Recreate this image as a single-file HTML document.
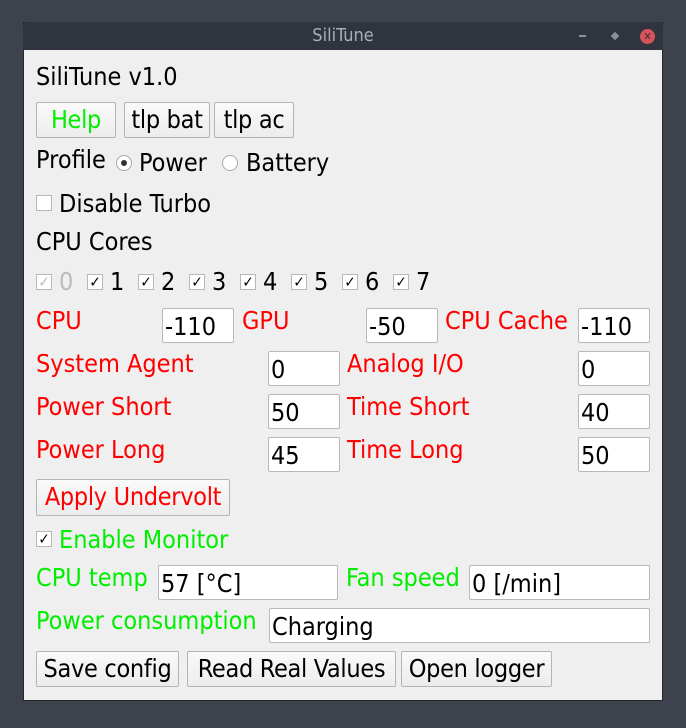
<!DOCTYPE html>
<html><head><meta charset="utf-8"><style>
*{margin:0;padding:0;box-sizing:border-box}
body{width:686px;height:728px;background:#3e424c;position:relative;overflow:hidden;font-family:"DejaVu Sans Condensed","DejaVu Sans","Liberation Sans",sans-serif;font-size:25px;color:#000}
.win{position:absolute;left:23px;top:22px;width:640px;height:679px;background:#efefef;border:1px solid #23262c}
.tb{position:absolute;left:23px;top:22px;width:640px;height:28px;background:#2f343f;border-radius:4px 4px 0 0;color:#a9adb6;font-size:18px;text-align:center;line-height:28px}
.a{position:absolute;white-space:nowrap;line-height:26px}
.btn{position:absolute;border:1px solid #b4b4b4;border-radius:2px;background:linear-gradient(#fafafa,#ececec);text-align:center;line-height:34px;white-space:nowrap;letter-spacing:-0.3px}
.in{position:absolute;background:#fff;border:1px solid #b8b8b8;border-radius:2px;padding-left:2px;line-height:36px;height:35px;white-space:nowrap}
.r{color:#ff0000}.g{color:#00ee00}
.cb{position:absolute;width:16px;height:16px;border:1px solid #b8b8b8;background:#fff;font-size:15px;line-height:14px;text-align:center}
.rad{position:absolute;width:16px;height:16px;border:1px solid #aaa;border-radius:50%;background:#fff}
</style></head><body>
<div class="win"></div>
<div class="tb">SiliTune</div>
<div style="position:absolute;left:579px;top:35px;width:7px;height:2px;background:#8b909a"></div>
<div style="position:absolute;left:612px;top:33px;width:6px;height:6px;background:#8b909a;transform:rotate(45deg)"></div>
<div style="position:absolute;left:640px;top:29px;width:15px;height:15px;border-radius:50%;background:#d9535a;color:#2f343f;font-size:11px;font-weight:bold;text-align:center;line-height:15px">✕</div>

<div class="a" style="left:36px;top:64px">SiliTune v1.0</div>
<div class="btn g" style="left:36px;top:102px;width:80px;height:36px">Help</div>
<div class="btn" style="left:124px;top:102px;width:86px;height:36px">tlp bat</div>
<div class="btn" style="left:214px;top:102px;width:80px;height:36px">tlp ac</div>

<div class="a" style="left:36px;top:147px">Profile</div>
<div class="rad" style="left:116px;top:155px"><div style="position:absolute;left:4px;top:4px;width:6px;height:6px;border-radius:50%;background:#333"></div></div>
<div class="a" style="left:139px;top:150px">Power</div>
<div class="rad" style="left:222px;top:155px"></div>
<div class="a" style="left:246px;top:150px">Battery</div>

<div class="cb" style="left:36px;top:195px"></div>
<div class="a" style="left:59px;top:191px">Disable Turbo</div>
<div class="a" style="left:36px;top:229px">CPU Cores</div>

<div class="cb" style="left:36px;top:274px;color:#bbb">✓</div><div class="a" style="left:59px;top:269px;color:#bbb">0</div>
<div class="cb" style="left:87px;top:274px">✓</div><div class="a" style="left:110px;top:269px">1</div>
<div class="cb" style="left:138px;top:274px">✓</div><div class="a" style="left:161px;top:269px">2</div>
<div class="cb" style="left:189px;top:274px">✓</div><div class="a" style="left:212px;top:269px">3</div>
<div class="cb" style="left:240px;top:274px">✓</div><div class="a" style="left:263px;top:269px">4</div>
<div class="cb" style="left:291px;top:274px">✓</div><div class="a" style="left:314px;top:269px">5</div>
<div class="cb" style="left:342px;top:274px">✓</div><div class="a" style="left:365px;top:269px">6</div>
<div class="cb" style="left:393px;top:274px">✓</div><div class="a" style="left:416px;top:269px">7</div>

<div class="a r" style="left:36px;top:308px">CPU</div>
<div class="in" style="left:162px;top:308px;width:72px">-110</div>
<div class="a r" style="left:242px;top:308px">GPU</div>
<div class="in" style="left:366px;top:308px;width:72px">-50</div>
<div class="a r" style="left:445px;top:308px">CPU Cache</div>
<div class="in" style="left:578px;top:308px;width:72px">-110</div>

<div class="a r" style="left:36px;top:351px">System Agent</div>
<div class="in" style="left:268px;top:351px;width:72px">0</div>
<div class="a r" style="left:347px;top:351px">Analog I/O</div>
<div class="in" style="left:578px;top:351px;width:72px">0</div>

<div class="a r" style="left:36px;top:394px">Power Short</div>
<div class="in" style="left:268px;top:394px;width:72px">50</div>
<div class="a r" style="left:347px;top:394px">Time Short</div>
<div class="in" style="left:578px;top:394px;width:72px">40</div>

<div class="a r" style="left:36px;top:437px">Power Long</div>
<div class="in" style="left:268px;top:437px;width:72px">45</div>
<div class="a r" style="left:347px;top:437px">Time Long</div>
<div class="in" style="left:578px;top:437px;width:72px">50</div>

<div class="btn r" style="left:36px;top:479px;width:194px;height:37px">Apply Undervolt</div>

<div class="cb" style="left:36px;top:531px">✓</div>
<div class="a g" style="left:59px;top:527px">Enable Monitor</div>

<div class="a g" style="left:36px;top:565px">CPU temp</div>
<div class="in" style="left:158px;top:565px;width:180px">57 [°C]</div>
<div class="a g" style="left:346px;top:565px">Fan speed</div>
<div class="in" style="left:469px;top:565px;width:181px">0 [/min]</div>

<div class="a g" style="left:36px;top:608px">Power consumption</div>
<div class="in" style="left:269px;top:608px;width:381px">Charging</div>

<div class="btn" style="left:36px;top:651px;width:143px;height:36px">Save config</div>
<div class="btn" style="left:187px;top:651px;width:209px;height:36px">Read Real Values</div>
<div class="btn" style="left:401px;top:651px;width:151px;height:36px">Open logger</div>
</body></html>
